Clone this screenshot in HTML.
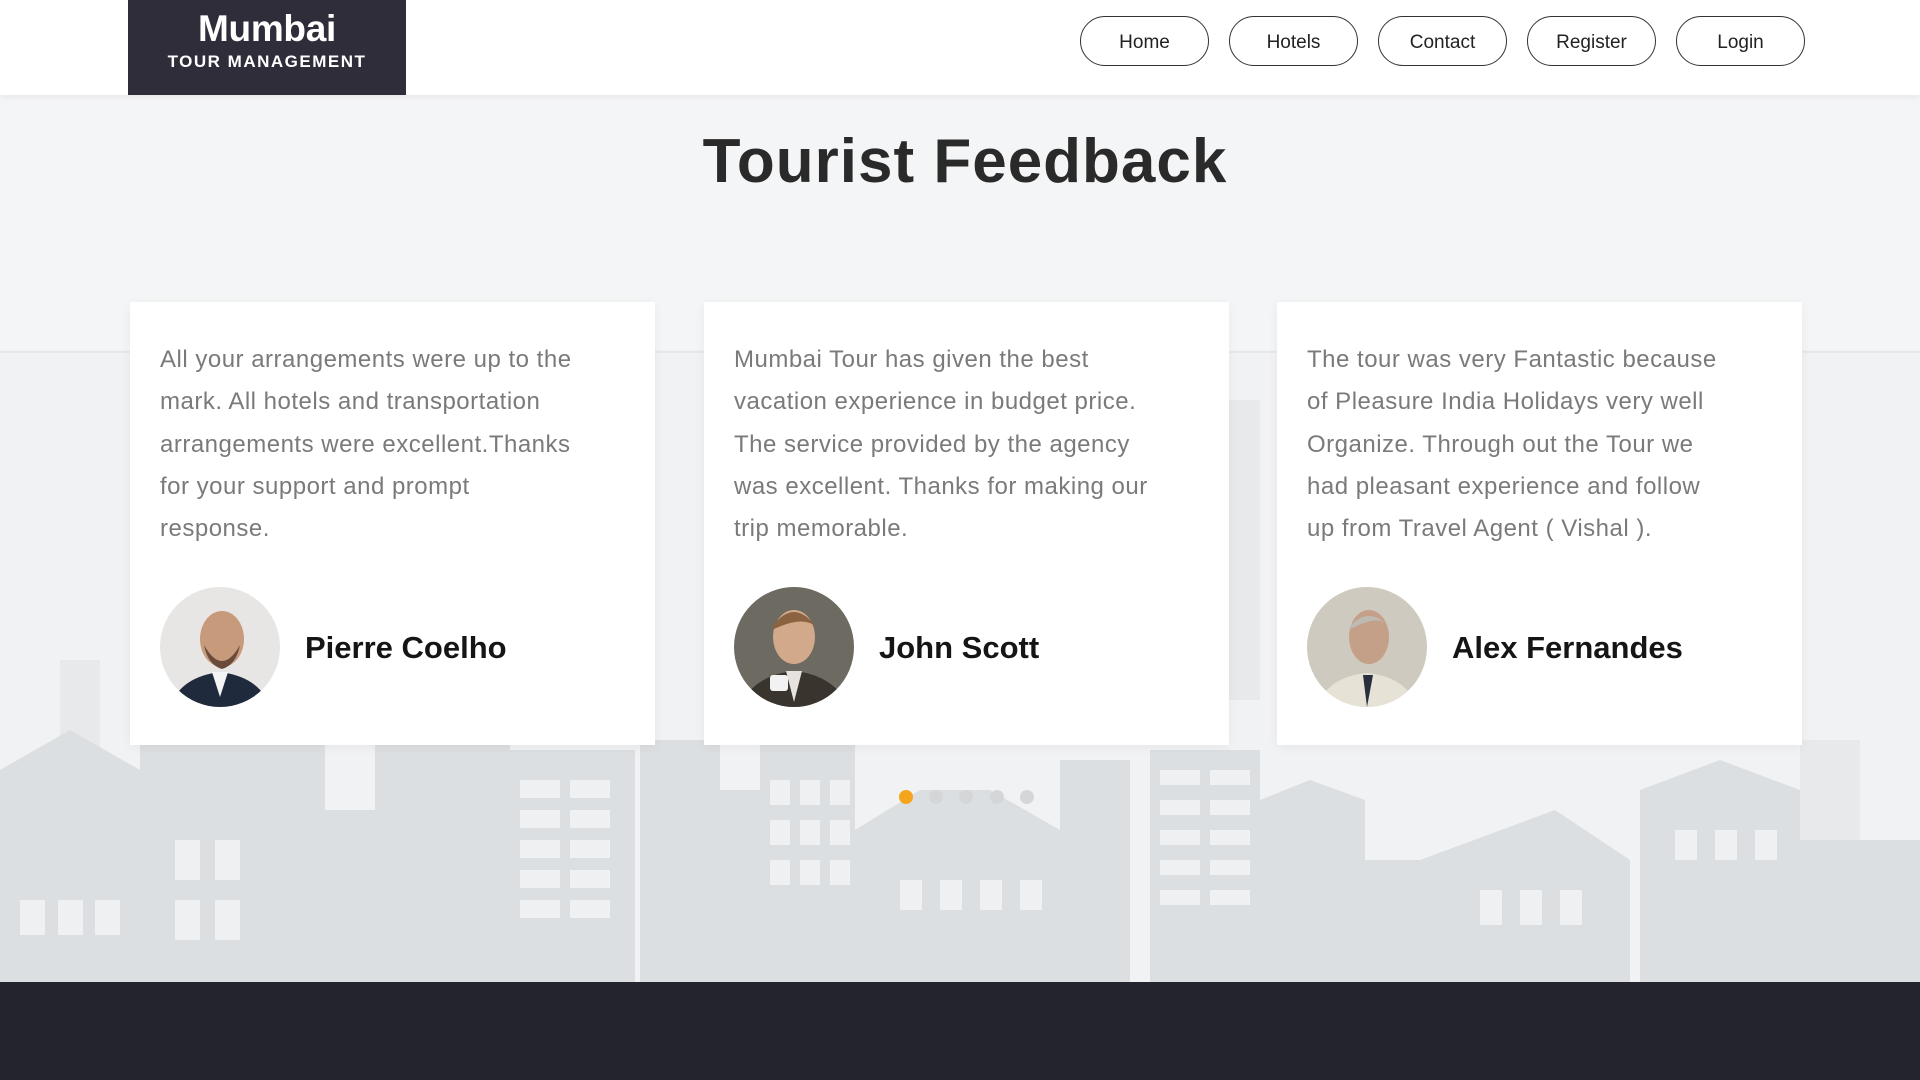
<!DOCTYPE html>
<html><head><meta charset="utf-8"><style>
*{margin:0;padding:0;box-sizing:border-box}
body{width:1920px;height:1080px;overflow:hidden;background:#f4f5f6;font-family:"Liberation Sans",sans-serif;position:relative}
header{position:absolute;top:0;left:0;width:1920px;height:95px;background:#fff;box-shadow:0 2px 6px rgba(0,0,0,.06);z-index:3}
.logo{position:absolute;left:128px;top:0;width:278px;height:95px;background:#302d3a;color:#fff;text-align:center}
.logo b{display:block;font-size:37px;margin-top:8px;letter-spacing:-.3px}
.logo span{display:block;font-size:17px;font-weight:bold;letter-spacing:1.5px;margin-top:2px}
.nav a{position:absolute;top:16px;width:129px;height:50px;border:1px solid #333;border-radius:25px;font-size:19px;color:#222;text-align:center;line-height:52px;text-decoration:none}
h1{position:absolute;top:126px;left:0;width:1930px;text-align:center;font-size:62px;color:#2a2a2a;font-weight:bold;letter-spacing:1px;z-index:2}
.card{position:absolute;top:302px;width:525px;height:443px;background:#fff;box-shadow:0 2px 10px rgba(0,0,0,.05);z-index:2}
.card p{position:absolute;left:30px;top:37px;width:480px;font-size:24px;line-height:42.3px;color:#7a7a7a;letter-spacing:.5px;white-space:nowrap}
.av{position:absolute;left:30px;top:285px;width:120px;height:120px;border-radius:50%;overflow:hidden}
.card h3{position:absolute;left:175px;top:328px;font-size:31px;color:#151515}
.dots{position:absolute;top:790px;left:0;z-index:2}
.dots i{position:absolute;width:14px;height:14px;border-radius:50%;background:#d4d6d8}
footer{position:absolute;top:982px;left:0;width:1920px;height:98px;background:#24242e}
svg.city{position:absolute;left:0;top:300px;z-index:1}
</style></head><body>
<header>
<div class="logo"><b>Mumbai</b><span>TOUR MANAGEMENT</span></div>
<div class="nav">
<a style="left:1080px">Home</a><a style="left:1229px">Hotels</a><a style="left:1378px">Contact</a><a style="left:1527px">Register</a><a style="left:1676px">Login</a>
</div>
</header>
<svg class="city" width="1920" height="682" viewBox="0 0 1920 682">
<rect x="0" y="50" width="1920" height="632" fill="#f1f2f3"/>
<line x1="0" y1="52" x2="1920" y2="52" stroke="#e6e8ea" stroke-width="2"/>
<g fill="#e7e9eb">
<rect x="60" y="360" width="40" height="322"/><rect x="1220" y="100" width="40" height="300"/><rect x="1800" y="440" width="60" height="242"/>
</g>
<g fill="#dcdfe1">
<polygon points="0,470 70,430 140,470 140,682 0,682"/>
<polygon points="140,440 200,360 260,440 260,682 140,682"/>
<polygon points="255,410 290,375 325,410 325,682 255,682"/>
<rect x="325" y="510" width="50" height="172"/>
<polygon points="375,420 442,360 510,420 510,682 375,682"/>
<rect x="505" y="450" width="130" height="232"/>
<rect x="640" y="440" width="80" height="242"/><rect x="720" y="490" width="40" height="192"/>
<rect x="760" y="440" width="95" height="242"/>
<polygon points="855,530 920,490 990,490 1060,530 1060,682 855,682"/>
<rect x="1060" y="460" width="70" height="222"/>
<rect x="1150" y="450" width="110" height="232"/>
<polygon points="1260,500 1310,480 1365,500 1365,682 1260,682"/>
<rect x="1365" y="560" width="55" height="122"/>
<polygon points="1420,560 1555,510 1630,560 1630,682 1420,682"/>
<polygon points="1640,490 1720,460 1800,490 1800,682 1640,682"/>
<rect x="1800" y="540" width="120" height="142"/>
</g>
<g fill="#eef0f1">
<rect x="20" y="600" width="25" height="35"/><rect x="58" y="600" width="25" height="35"/><rect x="95" y="600" width="25" height="35"/>
<rect x="175" y="540" width="25" height="40"/><rect x="215" y="540" width="25" height="40"/><rect x="175" y="600" width="25" height="40"/><rect x="215" y="600" width="25" height="40"/>
<rect x="520" y="480" width="40" height="18"/><rect x="570" y="480" width="40" height="18"/><rect x="520" y="510" width="40" height="18"/><rect x="570" y="510" width="40" height="18"/><rect x="520" y="540" width="40" height="18"/><rect x="570" y="540" width="40" height="18"/><rect x="520" y="570" width="40" height="18"/><rect x="570" y="570" width="40" height="18"/><rect x="520" y="600" width="40" height="18"/><rect x="570" y="600" width="40" height="18"/>
<rect x="770" y="480" width="20" height="25"/><rect x="800" y="480" width="20" height="25"/><rect x="830" y="480" width="20" height="25"/><rect x="770" y="520" width="20" height="25"/><rect x="800" y="520" width="20" height="25"/><rect x="830" y="520" width="20" height="25"/><rect x="770" y="560" width="20" height="25"/><rect x="800" y="560" width="20" height="25"/><rect x="830" y="560" width="20" height="25"/>
<rect x="1160" y="470" width="40" height="15"/><rect x="1210" y="470" width="40" height="15"/><rect x="1160" y="500" width="40" height="15"/><rect x="1210" y="500" width="40" height="15"/><rect x="1160" y="530" width="40" height="15"/><rect x="1210" y="530" width="40" height="15"/><rect x="1160" y="560" width="40" height="15"/><rect x="1210" y="560" width="40" height="15"/><rect x="1160" y="590" width="40" height="15"/><rect x="1210" y="590" width="40" height="15"/>
<rect x="1480" y="590" width="22" height="35"/><rect x="1520" y="590" width="22" height="35"/><rect x="1560" y="590" width="22" height="35"/>
<rect x="1675" y="530" width="22" height="30"/><rect x="1715" y="530" width="22" height="30"/><rect x="1755" y="530" width="22" height="30"/>
<rect x="900" y="580" width="22" height="30"/><rect x="940" y="580" width="22" height="30"/><rect x="980" y="580" width="22" height="30"/><rect x="1020" y="580" width="22" height="30"/>
</g>
</svg>
<h1>Tourist Feedback</h1>
<div class="card" style="left:130px"><p>All your arrangements were up to the<br>mark. All hotels and transportation<br>arrangements were excellent.Thanks<br>for your support and prompt<br>response.</p>
<div class="av"><svg width="120" height="120"><rect width="120" height="120" fill="#e8e6e4"/><path d="M10 120 Q20 90 60 85 Q100 90 110 120Z" fill="#1f2a3d"/><path d="M52 85 L60 110 L68 85Z" fill="#f4f4f4"/><ellipse cx="62" cy="52" rx="22" ry="28" fill="#c89a7c"/><path d="M44 58 Q62 90 80 58 Q76 78 62 82 Q48 78 44 58Z" fill="#6a4a3a"/></svg></div><h3>Pierre Coelho</h3></div>
<div class="card" style="left:704px"><p>Mumbai Tour has given the best<br>vacation experience in budget price.<br>The service provided by the agency<br>was excellent. Thanks for making our<br>trip memorable.</p>
<div class="av"><svg width="120" height="120"><rect width="120" height="120" fill="#6d6a62"/><path d="M5 120 Q20 88 60 84 Q100 88 115 120Z" fill="#3a342e"/><path d="M52 84 L60 115 L68 84Z" fill="#e6e3de"/><ellipse cx="60" cy="50" rx="21" ry="27" fill="#d2a98a"/><path d="M38 40 Q60 10 82 40 Q70 28 40 42Z" fill="#8a6440"/><rect x="36" y="88" width="18" height="16" rx="3" fill="#f2f2f2"/></svg></div><h3>John Scott</h3></div>
<div class="card" style="left:1277px"><p>The tour was very Fantastic because<br>of Pleasure India Holidays very well<br>Organize. Through out the Tour we<br>had pleasant experience and follow<br>up from Travel Agent ( Vishal ).</p>
<div class="av"><svg width="120" height="120"><rect width="120" height="120" fill="#cfcabf"/><path d="M10 120 Q20 90 60 86 Q100 90 110 120Z" fill="#e6e2d6"/><path d="M56 88 L60 120 L66 88Z" fill="#2a2f3d"/><ellipse cx="62" cy="50" rx="20" ry="27" fill="#c4a088"/><path d="M42 40 Q62 18 82 40 Q72 26 44 42Z" fill="#bdbab3"/></svg></div><h3>Alex Fernandes</h3></div>
<div class="dots"><i style="left:899px;background:#f4a51c"></i><i style="left:929px"></i><i style="left:959px"></i><i style="left:990px"></i><i style="left:1020px"></i></div>
<footer></footer>
</body></html>
